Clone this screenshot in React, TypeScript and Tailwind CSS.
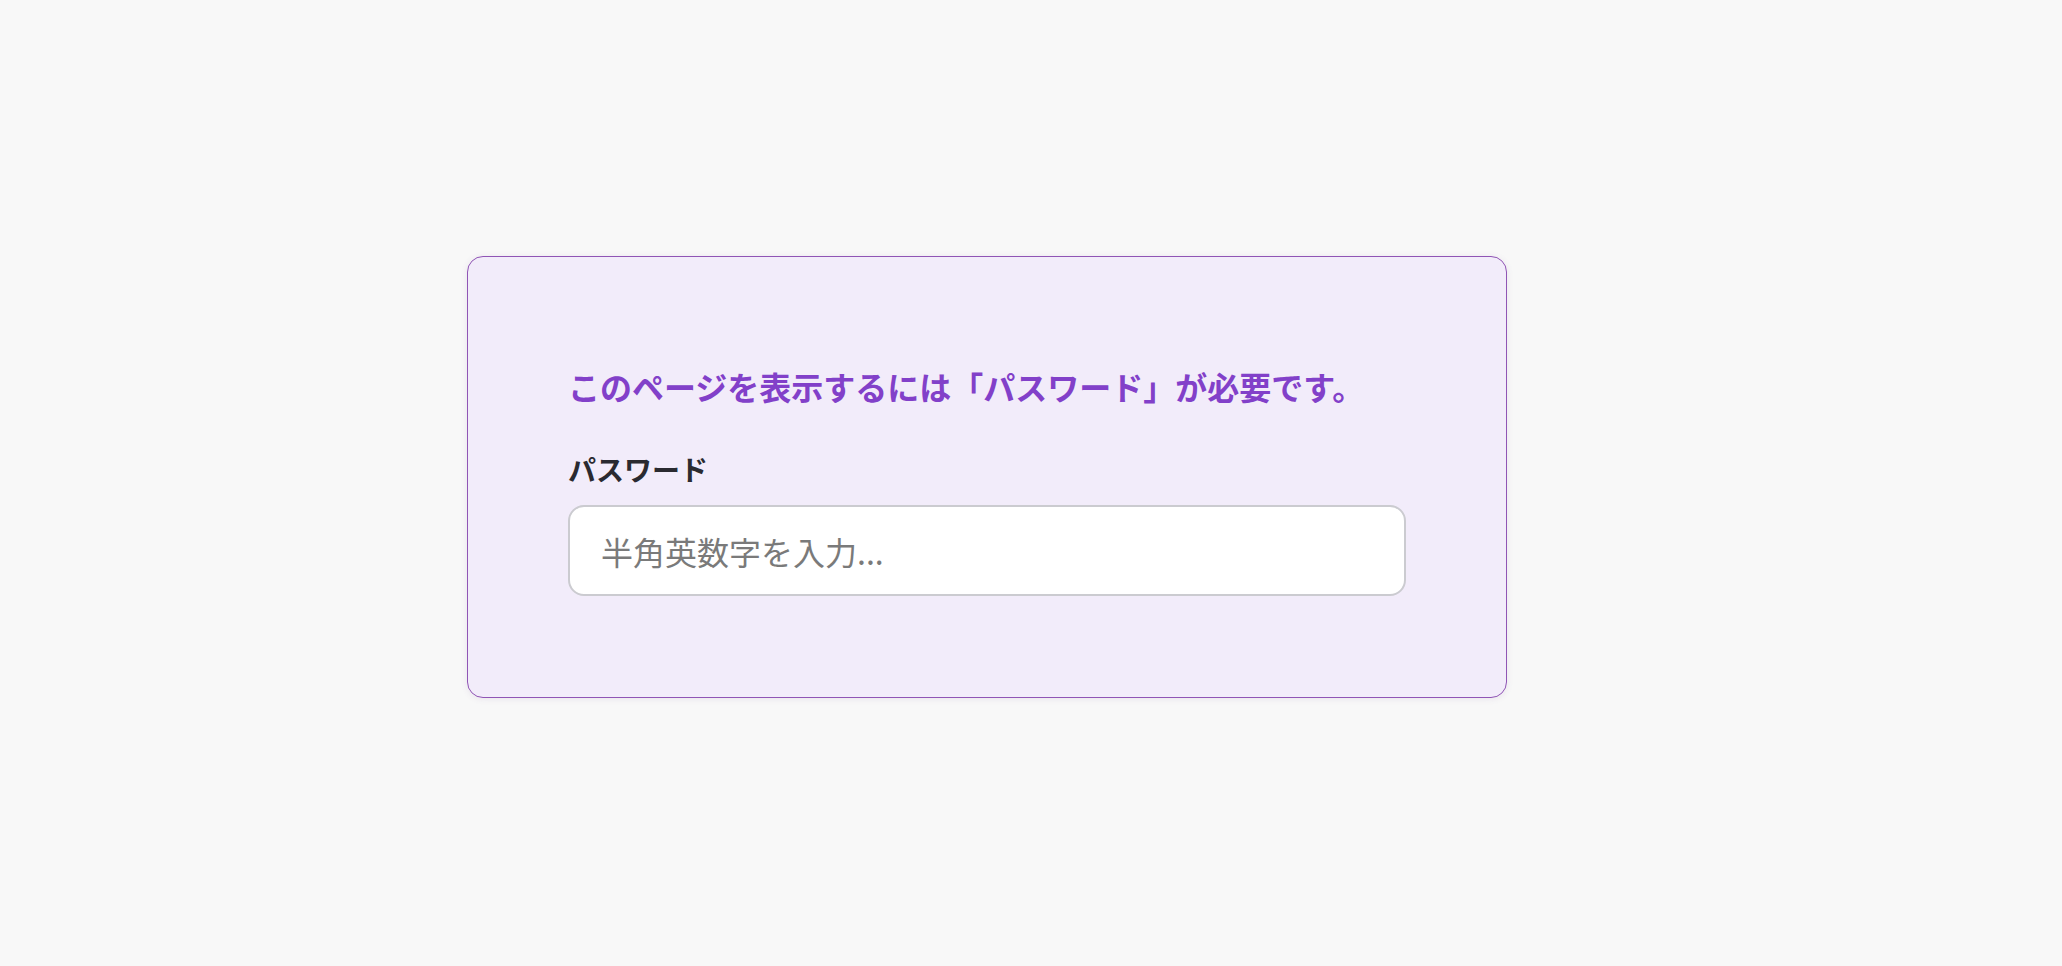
import React from 'react';

const App = () => {
  return (
    <div
      className="min-h-screen w-full bg-[#f8f8f8] pl-[467px] pt-[256px]"
      style={{ fontFamily: '"Noto Sans CJK JP", "Noto Sans", sans-serif' }}
    >
      <div className="w-[1040px] h-[442px] rounded-[16px] border border-[#9055b5] bg-[#f2ecfa] shadow-[0_1px_6px_rgba(120,80,160,0.12)] px-[100px] pt-[104px]">
        {/* Heading */}
        <h1 className="text-[32px] font-bold leading-[1.6] text-[#8240c9]">
          このページを表示するには「パスワード」が必要です。
        </h1>

        {/* Password field */}
        <label className="block mt-[36px] text-[28px] font-bold leading-[1.5] text-[#2a2a30]">
          パスワード
        </label>
        <input
          type="password"
          placeholder="半角英数字を入力..."
          className="mt-[15px] w-[838px] h-[91px] rounded-[16px] border-2 border-[#cbcbd0] bg-white px-[31px] text-[32px] text-[#333] placeholder:text-[#7a7a7a] outline-none"
        />
      </div>
    </div>
  );
};

export default App;
